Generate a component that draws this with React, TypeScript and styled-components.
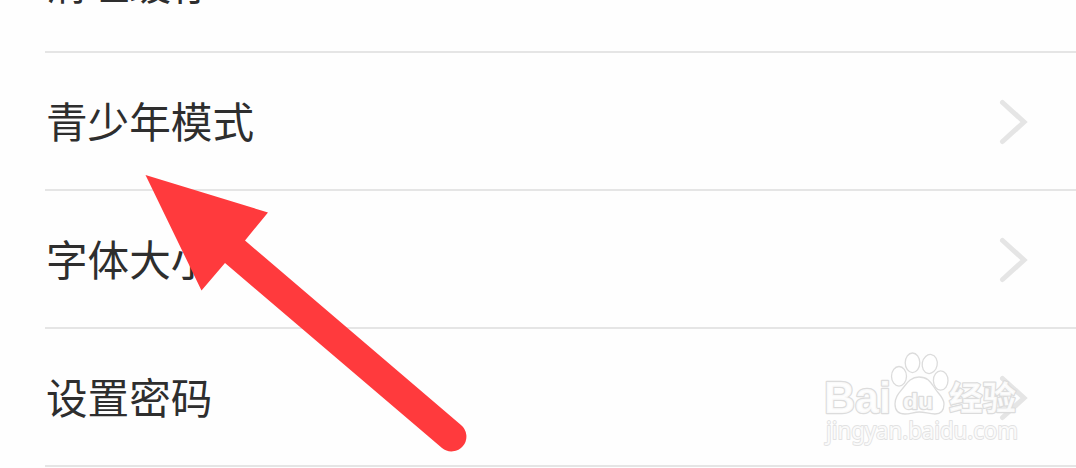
import React from 'react';
import styled, { createGlobalStyle } from 'styled-components';

const GlobalStyle = createGlobalStyle`
  body {
    margin: 0;
    background: #fefefe;
    overflow: hidden;
  }
`;

const Screen = styled.div`
  position: relative;
  width: 1076px;
  height: 468px;
  overflow: hidden;
  background: #fefefe;
  font-family: 'Noto Sans CJK SC', sans-serif;
`;

const SettingsList = styled.ul`
  list-style: none;
  margin: -85px 0 0 45px;
  padding: 0;
`;

const SettingsRow = styled.li`
  display: flex;
  align-items: center;
  justify-content: space-between;
  box-sizing: border-box;
  height: 138px;
  padding: 1px 47px 0 1px;
  border-bottom: 2px solid #e5e5e5;
`;

const Label = styled.span`
  padding-bottom: 4px;
  font-size: 41.6px;
  line-height: 60px;
  color: #2e2e2e;
`;

const Chevron = styled.svg`
  width: 30px;
  height: 48px;
  fill: none;
  stroke: #e5e5e5;
  stroke-width: 5;
  stroke-linecap: round;
`;

const Arrow = styled.svg`
  position: absolute;
  top: 0;
  left: 0;
  fill: #ff3a3d;
`;

const Watermark = styled.svg`
  position: absolute;
  left: 815px;
  top: 340px;
  fill: rgba(255, 255, 255, 0.85);
  stroke: #dcdcdc;
  stroke-width: 1.3;
  stroke-linejoin: round;

  text {
    stroke-width: 2.4;
    paint-order: stroke;
  }

  text.url {
    stroke: #e2e2e2;
    stroke-width: 1.8;
  }
`;

const items = [
  { label: '清理缓存', chevron: false },
  { label: '青少年模式', chevron: true },
  { label: '字体大小', chevron: true },
  { label: '设置密码', chevron: true },
];

const App = () => {
  return (
    <Screen>
      <GlobalStyle />
      <SettingsList>
        {items.map((item) => (
          <SettingsRow key={item.label}>
            <Label>{item.label}</Label>
            {item.chevron && (
              <Chevron viewBox="0 0 30 48">
                <path d="M3.5 4.5L25 24L3.5 43.5" />
              </Chevron>
            )}
          </SettingsRow>
        ))}
      </SettingsList>

      <Arrow width="1076" height="468" viewBox="0 0 1076 468">
        <path d="M145.5 175L268 212.5L245 240.5L461 425A14.8 14.8 0 0 1 442 448L225 263L201.5 290.5Z" />
      </Arrow>

      <Watermark width="220" height="128" viewBox="0 0 220 128">
        <text x="9" y="72.5" fontFamily="Liberation Sans" fontWeight="700" fontSize="44" textLength="67" lengthAdjust="spacingAndGlyphs">Bai</text>
        <ellipse cx="84" cy="36.3" rx="7.5" ry="9.8" />
        <ellipse cx="97.5" cy="22.8" rx="7.3" ry="9.8" />
        <ellipse cx="114.7" cy="24" rx="7.5" ry="9.6" transform="rotate(10 114.7 24)" />
        <ellipse cx="125.7" cy="40.5" rx="7.3" ry="9.6" />
        <path d="M104 37C96 37 92 43 88 48C84 53 80 57 80 64C80 71 84 74 90 74C95 74 99 72 104.5 72C110 72 114 74 120 74C126 74 129 70 129 64C129 57 123 54 119 47C115 41 112 37 104 37Z" />
        <text x="88" y="68.5" fontFamily="Liberation Sans" fontWeight="700" fontSize="22" textLength="30" lengthAdjust="spacingAndGlyphs">du</text>
        <text x="134" y="70" fontFamily="Noto Sans CJK SC" fontWeight="700" fontSize="33.5" textLength="67">经验</text>
        <text className="url" x="11" y="98.5" fontFamily="Noto Sans" fontSize="23" textLength="192" lengthAdjust="spacingAndGlyphs">jingyan.baidu.com</text>
      </Watermark>
    </Screen>
  );
};

export default App;
